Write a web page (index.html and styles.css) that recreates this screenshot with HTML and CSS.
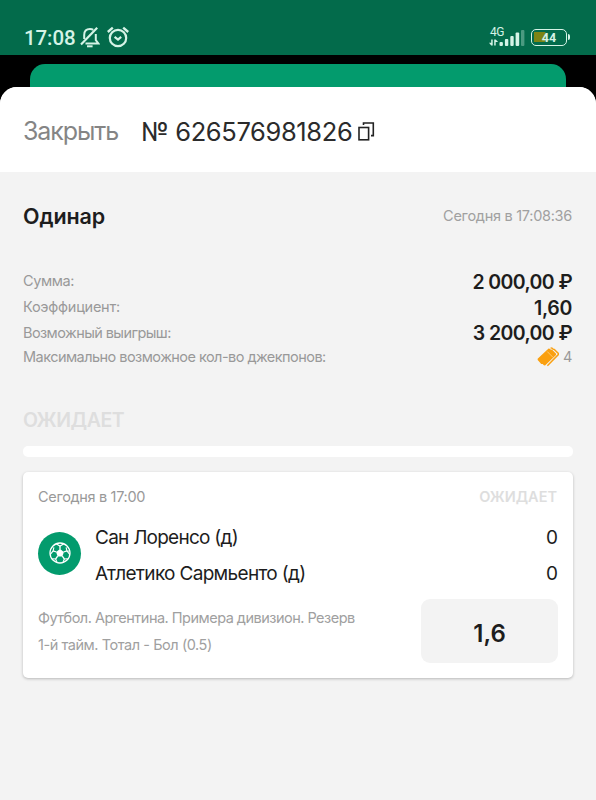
FILE: index.html
```html
<!DOCTYPE html>
<html lang="ru">
<head>
    <meta charset="UTF-8">
    <meta name="viewport" content="width=device-width,user-scalable=no">
    <title>Одинар</title>
    <link rel="stylesheet" href="styles.css">
</head>
<body>
<header class="status">
    <span class="time">17:08</span>
    <svg class="bell" width="20" height="22" viewBox="0 0 20 22" fill="none" stroke="#d5f3e6" stroke-width="2">
        <path d="M4.2 13V9C4.2 5.2 6.4 3 10 3c1.3 0 2.4.3 3.2.9M15.8 8v6.2l2.6 3.3H5.5"/>
        <path d="M1 18.4L17.2 1.8" stroke-width="2.2"/>
        <path d="M7 20.3h5.6" stroke-width="2"/>
    </svg>
    <svg class="alarm" width="22" height="22" viewBox="0 0 22 22" fill="none" stroke="#d5f3e6" stroke-width="2.2">
        <circle cx="11" cy="12" r="8.2"/>
        <path d="M.8 6l5-4.3M21.2 6l-5-4.3" stroke-width="2.4"/>
        <path d="M7.6 10.8l3.4 2.7 3.2-2.7"/>
    </svg>
    <div class="signal">
        <span class="net">4G</span>
        <svg width="38" height="18" viewBox="0 0 38 18" fill="#d5f3e6">
            <path d="M2.2 10.5h1.5v6H2.2L0 13.8h2.2zM5.2 16.5v-6h1.5l2.4 2.6H6.7v3.4z"/>
            <rect x="10.5" y="13" width="3.4" height="4" rx="1"/>
            <rect x="15.9" y="10" width="3.4" height="7" rx="1"/>
            <rect x="21.3" y="7" width="3.4" height="10" rx="1"/>
            <rect x="26.6" y="3.5" width="3.6" height="13.5" rx="1"/>
            <rect x="32" y="1" width="3.4" height="16" rx="1" opacity=".35"/>
        </svg>
    </div>
    <div class="battery"><span>44</span></div>
</header>
<div class="back"></div>
<main class="sheet">
    <div class="head">
        <a class="close">Закрыть</a>
        <span class="number">№ 626576981826</span>
        <svg class="copy" width="17" height="19" viewBox="0 0 17 19" fill="none" stroke="#222" stroke-width="1.6">
            <rect x="1" y="5.5" width="9.6" height="12.3"/>
            <path d="M5.5 3V1H15.3v12.6H13"/>
        </svg>
    </div>
    <div class="content">
        <div class="title">
            <h1>Одинар</h1>
            <span class="date">Сегодня в 17:08:36</span>
        </div>
        <ul class="info">
            <li><span class="sum">Сумма:</span><b>2 000,00 ₽</b></li>
            <li><span class="ratio">Коэффициент:</span><b class="odd">1,60</b></li>
            <li><span class="win">Возможный выигрыш:</span><b>3 200,00 ₽</b></li>
            <li class="last"><span class="max">Максимально возможное кол-во джекпонов:</span>
                <em>
                    <svg width="23" height="20" viewBox="0 0 23 20">
                        <path fill="#faa010" d="M.6 11.8L11.6 1.6l1 .1 1 .9 1.5.1 4 4-.1 1.2L8 18.4l-1.1-.1-1.2-1.2-1.5-.1-3.5-4z"/>
                        <path fill="none" stroke="#faa010" stroke-width="1.4" d="M13.6 1l1.4.1 1.2 1.2 1.1.1 4 4v1.2L10.4 18.7"/>
                        <path stroke="#ffd48c" stroke-width=".8" d="M10.3 4.6l5.6 5.7"/>
                    </svg>
                    4
                </em>
            </li>
        </ul>
        <div class="state">ОЖИДАЕТ</div>
        <div class="bar"></div>
        <section class="card">
            <div class="card-top">
                <span class="start">Сегодня в 17:00</span>
                <span class="wait">ОЖИДАЕТ</span>
            </div>
            <div class="match">
                <div class="ball">
                    <svg width="22" height="22" viewBox="0 0 22 22" fill="none" stroke="#fff">
                        <circle cx="11" cy="11" r="10" stroke-width="1.3"/>
                        <path fill="#fff" stroke="none" d="M11 7.1l3.9 2.8-1.5 4.6H8.6L7.1 9.9z"/>
                        <path stroke-width="1.3" d="M11 7.5V4M14.6 10l3.3-1.1M13.3 14.2l2.1 2.8M8.7 14.2L6.6 17M7.4 10L4.1 8.9"/>
                        <path stroke-width="1.1" d="M7 1.8L11 4l4-2.2M20.5 9l-2.6-.1-.8-3.6M17.9 8.9l2.8 3.4M18.6 16.8l-3.2.2-1.6 3.4M3.4 16.8l3.2.2 1.6 3.4M1.3 12.3L4.1 8.9l.8-3.6"/>
                    </svg>
                </div>
                <div class="teams">
                    <p><span class="home">Сан Лоренсо (д)</span><i>0</i></p>
                    <p><span class="away">Атлетико Сармьенто (д)</span><i>0</i></p>
                </div>
            </div>
            <div class="bet">
                <div class="desc">
                    <p class="league">Футбол. Аргентина. Примера дивизион. Резерв</p>
                    <p class="market">1-й тайм. Тотал - Бол (0.5)</p>
                </div>
                <div class="coef">1,6</div>
            </div>
        </section>
    </div>
</main>
</body>
</html>
```

FILE: styles.css
```css
html,body{ height:100%; }
body,ul,p,h1{ margin:0; padding:0; }
*{ box-sizing:border-box; }
body{
    display:flex;
    flex-direction:column;
    overflow:hidden;
    background:#000;
    color:#1d1d1d;
    font-family:Inter,"Liberation Sans",sans-serif;
    white-space:nowrap;
}
i,em{ font-style:normal; }
svg{ display:block; flex:none; }

/* status bar */
.status{
    height:55px;
    flex:none;
    display:flex;
    align-items:flex-start;
    padding:27px 29px 0 24px;
    background:#036b4b;
    color:#d5f3e6;
}
.time{ width:56px; font:500 20.5px/22px Roboto,sans-serif; letter-spacing:-.1px; }
.bell{ margin-top:-1px; }
.alarm{ margin:-1px 0 0 7px; }
.signal{ margin-left:auto; width:38px; height:21px; display:grid; }
.signal > *{ grid-area:1/1; }
.signal svg{ margin-top:2px; }
.net{ font:12px/11px Roboto,sans-serif; letter-spacing:-.5px; padding-left:1px; }
.battery{
    position:relative;
    width:36px;
    height:17px;
    margin:2px 0 0 4px;
    border:1.5px solid #d5f3e6;
    border-radius:5px;
    background:linear-gradient(90deg,#7c8414 11px,transparent 12px) 2px 2px/28px 10px no-repeat;
    font:bold 12.5px/15px Roboto,sans-serif;
    text-align:center;
}
.battery::after{
    content:"";
    position:absolute;
    right:-4px;
    top:4px;
    width:2px;
    height:6px;
    border-radius:0 2px 2px 0;
    background:#d5f3e6;
}

/* sheets */
.back{
    height:23px;
    flex:none;
    margin:9px 30px 0;
    border-radius:15px 15px 0 0;
    background:#039b6d;
}
.sheet{ flex:1; border-radius:17px 17px 0 0; background:#f3f3f3; overflow:hidden; }
.head{
    height:85px;
    display:flex;
    align-items:center;
    padding:3px 23px 0;
    background:#fff;
    font-size:25px;
}
.close{ width:118px; color:#858585; letter-spacing:-1.1px; }
.number{ width:217px; color:#2b2b2b; font-size:25.5px; letter-spacing:-.38px; }
.copy{ margin-top:1px; }
.content{ padding:29px 23px 0; }
.title{ height:30px; display:flex; justify-content:space-between; align-items:center; }
.title h1{ font-size:21.5px; font-weight:600; letter-spacing:-.1px; }
.date{ margin:-1px 1px 0 0; color:#a0a0a0; font-size:14.5px; letter-spacing:-.28px; }

.info{ list-style:none; margin-top:38px; color:#999; font-size:14.5px; letter-spacing:-.4px; }
.info li{ height:25.5px; display:flex; justify-content:space-between; line-height:24px; }
.info b{ margin-right:1px; color:#1d1d1d; font-size:19.5px; font-weight:600; line-height:27px; letter-spacing:-.6px; }
.info .odd{ letter-spacing:-.3px; }
.info em{ display:flex; align-items:center; gap:3px; margin:-1px 1px 1px 0; }
.ratio{ letter-spacing:-.25px; }
.win{ margin-top:.5px; letter-spacing:-.58px; }
.max{ margin-top:-1px; letter-spacing:-.54px; }

.state{ margin-top:33px; height:32px; color:#dedede; font-size:19.5px; font-weight:600; line-height:32px; letter-spacing:-.45px; }
.bar{ height:11px; margin-top:10px; border-radius:5px; background:#fff; }
.card{
    height:206px;
    margin-top:15px;
    padding:13px 15px;
    border-radius:5px;
    background:#fff;
    box-shadow:0 1px 3px rgba(0,0,0,.25);
}
.card-top{ height:22px; display:flex; justify-content:space-between; align-items:center; }
.start{ color:#999; font-size:14.5px; letter-spacing:-.33px; }
.wait{ margin-right:1px; color:#dedede; font-size:14.5px; font-weight:600; }
.match{ display:flex; align-items:center; height:74px; margin-top:11px; }
.ball{
    width:43px;
    height:43px;
    margin:-4px 14px 0 0;
    border-radius:50%;
    background:#039b6d;
    display:flex;
    align-items:center;
    justify-content:center;
}
.teams{ flex:1; padding-top:1px; font-size:19px; line-height:36px; }
.teams p{ display:flex; justify-content:space-between; }
.home{ letter-spacing:-.75px; }
.away{ letter-spacing:-.68px; }
.bet{ display:flex; justify-content:space-between; margin-top:7px; }
.desc{ color:#a0a0a0; font-size:14.5px; line-height:27px; padding-top:5px; }
.league{ letter-spacing:-.51px; }
.market{ letter-spacing:-.44px; }
.coef{
    width:137px;
    height:64px;
    border-radius:9px;
    background:#f3f3f3;
    font-size:24px;
    font-weight:600;
    line-height:69px;
    text-align:center;
}
```
